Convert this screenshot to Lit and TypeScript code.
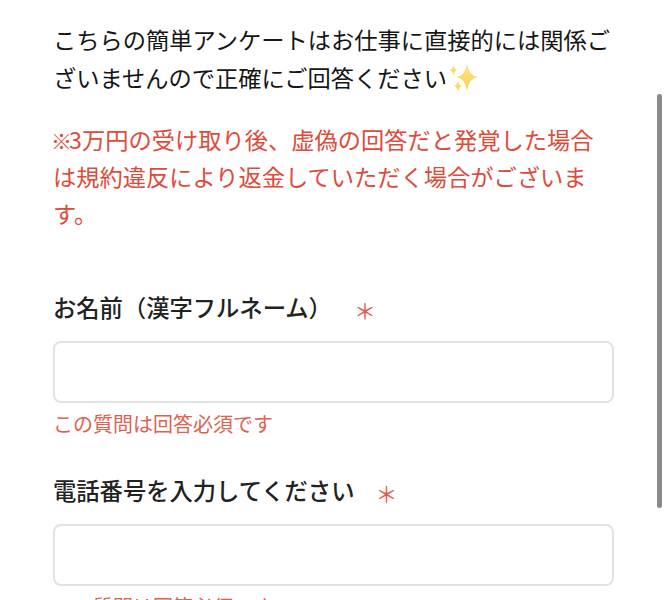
import { LitElement, html, css } from "lit";
import { customElement } from "lit/decorators.js";

const star = (cx: number, cy: number, ry: number) => {
  const rx = ry * 0.78;
  const k = ry * 0.1;
  return `M${cx} ${cy - ry}Q${cx + k} ${cy - k} ${cx + rx} ${cy}Q${cx + k} ${cy + k} ${cx} ${cy + ry}Q${cx - k} ${cy + k} ${cx - rx} ${cy}Q${cx - k} ${cy - k} ${cx} ${cy - ry}Z`;
};

@customElement("app-root")
export class AppRoot extends LitElement {
  static styles = css`
    :host {
      display: block;
      position: relative;
      width: 667px;
      height: 600px;
      overflow: hidden;
      background: #fff;
      font-family: "Noto Sans CJK JP", "Liberation Sans", sans-serif;
      color: #1a1a1a;
    }
    .page {
      display: flex;
      flex-direction: column;
      padding: 20px 53px 0 53px;
    }
    p {
      margin: 0;
    }
    .intro {
      font-size: 23.25px;
      line-height: 38px;
      color: #161616;
    }
    .sparkles {
      width: 32px;
      height: 32px;
      vertical-align: -7px;
      margin-left: 1px;
    }
    .notice {
      margin-top: 25px;
      font-size: 23.25px;
      line-height: 37px;
      color: #e04a38;
    }
    .mark {
      font-size: 21px;
      font-weight: 500;
      line-height: 1;
      margin-left: -2px;
      margin-right: -3px;
    }
    .field {
      display: flex;
      flex-direction: column;
    }
    .field.first {
      margin-top: 59px;
    }
    .field.second {
      margin-top: 35px;
    }
    .label {
      display: flex;
      align-items: center;
      height: 32px;
      font-size: 23.3px;
      font-weight: 500;
      color: #222;
    }
    .req {
      font-weight: 400;
      font-size: 22px;
      line-height: 32px;
      height: 32px;
      color: #e25a48;
      position: relative;
      top: 2px;
    }
    .first .req { margin-left: 22px; }
    .second .req { margin-left: 21px; }
    .input {
      box-sizing: border-box;
      margin-top: 18px;
      height: 62px;
      width: 100%;
      border: 2px solid #e2e2e2;
      border-radius: 8px;
      background: #fff;
      outline: none;
      padding: 0 12px;
    }
    .error {
      margin-top: 6px;
      font-size: 20px;
      line-height: 30px;
      color: #e2604e;
    }
    .scrollbar {
      position: absolute;
      left: 657px;
      top: 94px;
      width: 5px;
      height: 414px;
      border-radius: 3px;
      background: #8a8a8a;
    }
  `;

  render() {
    return html`
      <div class="page">
        <p class="intro">
          こちらの簡単アンケートはお仕事に直接的には関係ございませんので正確にご回答ください<svg
            class="sparkles"
            viewBox="0 0 32 32"
            aria-hidden="true"
          >
            <defs>
              <linearGradient id="gold" x1="0" y1="0" x2="0" y2="1">
                <stop offset="0" stop-color="#fde68a"></stop>
                <stop offset="1" stop-color="#fbd04f"></stop>
              </linearGradient>
            </defs>
            <path d=${star(19, 15, 14)} fill="url(#gold)"></path>
            <path d=${star(5.5, 8, 5.5)} fill="url(#gold)"></path>
            <path d=${star(10, 24, 6)} fill="url(#gold)"></path>
          </svg>
        </p>
        <p class="notice">
          <span class="mark">※</span>3万円の受け取り後、虚偽の回答だと発覚した場合は規約違反により返金していただく場合がございます。
        </p>
        <div class="field first">
          <div class="label"><span>お名前（漢字フルネーム）</span><span class="req">＊</span></div>
          <input class="input" type="text" />
          <div class="error">この質問は回答必須です</div>
        </div>
        <div class="field second">
          <div class="label"><span>電話番号を入力してください</span><span class="req">＊</span></div>
          <input class="input" type="text" />
          <div class="error">この質問は回答必須です</div>
        </div>
      </div>
      <div class="scrollbar"></div>
    `;
  }
}
